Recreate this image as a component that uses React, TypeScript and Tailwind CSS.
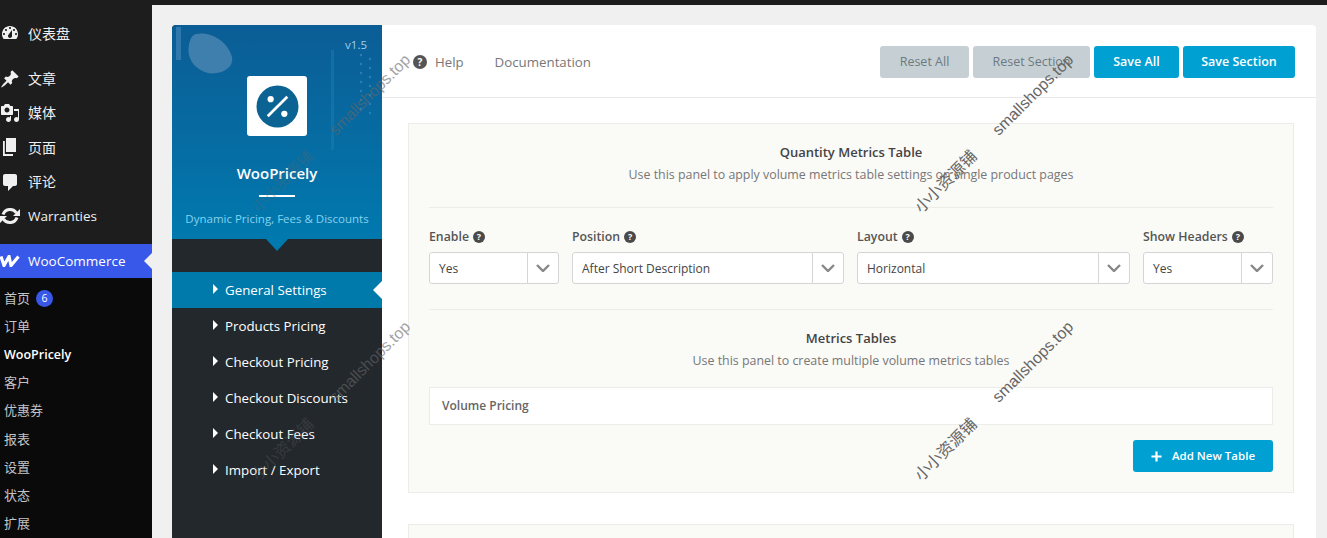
import React from "react";

const font = { fontFamily: '"Open Sans","Noto Sans CJK SC",sans-serif' };

function Help({ className = "" }: { className?: string }) {
  return (
    <span className={`inline-flex items-center justify-center rounded-full bg-[#4a4a4a] text-white font-bold ${className}`}>?</span>
  );
}

const icons: Record<string, React.ReactNode> = {
  dash: (
    <svg viewBox="0 0 20 20" className="w-[20px] h-[20px]" fill="#f0f0f1">
      <path fillRule="evenodd" d="M3.76 16h12.48c1.100-1.370 1.760-3.110 1.760-5 0-4.420-3.580-8-8-8s-8 3.580-8 8c0 1.890.66 3.630 1.760 5zM10 4c.55 0 1 .45 1 1s-.45 1-1 1-1-.45-1-1 .45-1 1-1zM6 6c.55 0 1 .45 1 1s-.45 1-1 1-1-.45-1-1 .45-1 1-1zm8 0c.55 0 1 .45 1 1s-.45 1-1 1-1-.45-1-1 .45-1 1-1zm-5.370 5.550L12 7v6c0 1.100-.9 2-2 2s-2-.9-2-2c0-.57.24-1.080.63-1.450zM4 10c.55 0 1 .45 1 1s-.45 1-1 1-1-.45-1-1 .45-1 1-1zm12 0c.55 0 1 .45 1 1s-.45 1-1 1-1-.45-1-1 .45-1 1-1z" />
    </svg>
  ),
  pin: (
    <svg viewBox="0 0 20 20" className="w-[20px] h-[20px]" fill="#f0f0f1">
      <path d="M10.440 3.020l1.820-1.820 6.360 6.350-1.830 1.820c-1.050-.68-2.480-.57-3.410.36l-.75.75c-.92.93-1.040 2.350-.35 3.410l-1.830 1.820-2.410-2.410-2.800 2.790c-.42.42-3.380 2.710-3.800 2.290s1.860-3.390 2.280-3.810l2.790-2.790L4.100 9.360l1.830-1.820c1.050.69 2.480.57 3.400-.36l.75-.75c.93-.92 1.050-2.350.36-3.410z" />
    </svg>
  ),
  media: (
    <svg viewBox="0 0 20 20" className="w-[20px] h-[20px]" fill="#f0f0f1">
      <path fillRule="evenodd" d="M13 11V4c0-.55-.45-1-1-1h-1.670L9 1H5L3.670 3H2c-.55 0-1 .45-1 1v7c0 .55.45 1 1 1h10c.55 0 1-.45 1-1zM7 4.500c1.380 0 2.500 1.120 2.500 2.500S8.380 9.500 7 9.500 4.500 8.380 4.500 7 5.620 4.500 7 4.500z" />
      <path d="M14 6h5v10.500c0 1.380-1.120 2.500-2.500 2.500S14 17.880 14 16.500s1.120-2.500 2.500-2.500c.57 0 1.100.19 1.500.5V8h-4zM11 13v3.500c0 1.380-1.120 2.500-2.500 2.500S6 17.880 6 16.500 7.120 14 8.500 14c.55 0 1.080.19 1.500.5V13z" />
    </svg>
  ),
  page: (
    <svg viewBox="0 0 20 20" className="w-[20px] h-[20px]" fill="#f0f0f1">
      <path d="M6 1h10v14H6z" />
      <path d="M3 4h1.800v13H13v2H3z" />
    </svg>
  ),
  comment: (
    <svg viewBox="0 0 20 20" className="w-[20px] h-[20px]" fill="#f0f0f1">
      <path d="M5 2h10c1.100 0 2 .9 2 2v8c0 1.100-.9 2-2 2h-2l-5 5v-5H5c-1.100 0-2-.9-2-2V4c0-1.100.9-2 2-2z" />
    </svg>
  ),
  sync: (
    <svg viewBox="0 0 20 20" className="w-[20px] h-[20px]" fill="none" stroke="#f0f0f1" strokeWidth="3">
      <path d="M3 8.500A7.500 7.500 0 0 1 16.500 7" />
      <path d="M17 11.500A7.500 7.500 0 0 1 3.500 13" />
      <path d="M20 3v7h-7z" fill="#f0f0f1" stroke="none" />
      <path d="M0 17v-7h7z" fill="#f0f0f1" stroke="none" />
    </svg>
  ),
};

const topMenu = [
  { k: "dash", t: "仪表盘" },
  { k: "pin", t: "文章" },
  { k: "media", t: "媒体" },
  { k: "page", t: "页面" },
  { k: "comment", t: "评论" },
  { k: "sync", t: "Warranties" },
];

const subMenu = ["订单", "WooPricely", "客户", "优惠券", "报表", "设置", "状态", "扩展"];
const tabs = ["General Settings", "Products Pricing", "Checkout Pricing", "Checkout Discounts", "Checkout Fees", "Import / Export"];

function Sidebar() {
  return (
    <aside className="w-[152px] shrink-0 flex flex-col bg-[#1d1d1d] h-full">
      <div className="pt-[11px] pb-[11px]">
        {topMenu.map((m) => (
          <div key={m.t} className={`flex items-center h-[34.400px] text-[#f0f0f1] text-[14px] ${m.k === "dash" ? "mb-[11px]" : ""}`}>
            <span className="w-[28px] shrink-0 flex items-center">{icons[m.k]}</span>
            <span className={m.k === "sync" ? "text-[13.500px]" : ""}>{m.t}</span>
          </div>
        ))}
      </div>
      <div className="relative h-[34px] bg-[#3858e9] flex items-center text-white text-[13.500px] shrink-0">
        <span className="w-[28px] shrink-0 flex items-center">
          <svg viewBox="0 0 20 12" className="w-[20px] h-[12px]">
            <path d="M1 1.500 L4 10.500 L9 1.500 L11 10.500 L18.500 1.500" fill="none" stroke="#fff" strokeWidth="3.200" />
          </svg>
        </span>
        WooCommerce
        <span className="absolute right-0 top-[9px] w-0 h-0 border-y-[8px] border-y-transparent border-r-[8px] border-r-[#f0f0f1]" />
      </div>
      <div className="flex-1 bg-[#0a0a0a] pt-[6px] text-[13px] pl-[4px] text-[#c3c4c7]">
        <div className="h-[28.200px] flex items-center gap-[6px]">
          首页
          <span className="w-[17px] h-[17px] rounded-full bg-[#3858e9] text-white text-[10.500px] flex items-center justify-center">6</span>
        </div>
        {subMenu.map((s) => (
          <div key={s} className={`h-[28.200px] flex items-center ${s === "WooPricely" ? "text-white font-semibold text-[12.500px] pt-[2px]" : ""}`}>{s}</div>
        ))}
      </div>
    </aside>
  );
}

function PluginNav() {
  return (
    <div className="w-[210px] shrink-0 bg-[#23282d] rounded-tl-[4px] overflow-hidden">
      <div className="relative h-[214px] bg-gradient-to-b from-[#0b5d95] to-[#0079ae] flex flex-col items-center pt-[51px]">
        <svg viewBox="0 0 210 130" className="absolute left-0 top-0 w-[210px] h-[130px]">
          <rect x="4" y="2" width="5" height="33" fill="#2f78ad" />
          <path d="M24 9 C38 6 56 16 60 32 C62 44 48 50 36 48 C24 45 14 34 17 20 C18 14 20 10 24 9Z" fill="#3f7fae" />
          <rect x="159" y="25" width="3" height="100" fill="#1a7db3" opacity="0.5" />
          {[0, 1, 2, 3, 4, 5, 6].map((r) => (
            <React.Fragment key={r}>
              <circle cx="189" cy={30 + r * 9} r="1.200" fill="#2a7fb3" />
              <circle cx="198" cy={34 + r * 9} r="1.200" fill="#2a7fb3" />
            </React.Fragment>
          ))}
        </svg>
        <span className="absolute right-[15px] top-[11px] text-[11.500px] text-[#9fd0ea]">v1.5</span>
        <div className="relative w-[60px] h-[60px] bg-white rounded-[3px] flex items-center justify-center">
          <svg viewBox="0 0 44 44" className="w-[43px] h-[43px]">
            <circle cx="22" cy="22" r="21.500" fill="#0b6394" />
            <circle cx="15" cy="14.500" r="3.200" fill="#fff" />
            <circle cx="29" cy="29.500" r="3.200" fill="#fff" />
            <path d="M12 32 L32 12" stroke="#fff" strokeWidth="2.800" />
          </svg>
        </div>
        <div className="relative mt-[26px] text-[15px] leading-[22px] font-semibold text-white">WooPricely</div>
        <div className="relative mt-[11px] w-[36px] h-[2px] bg-white" />
        <div className="relative mt-[13px] text-[11.500px] leading-[18px] text-[#84d3f0] whitespace-nowrap">Dynamic Pricing, Fees &amp; Discounts</div>
        <span className="absolute left-1/2 -ml-[11px] -bottom-[12px] w-0 h-0 border-x-[11px] border-x-transparent border-t-[12px] border-t-[#0079ae]" />
      </div>
      <div className="pt-[33px]">
        {tabs.map((t, i) => (
          <div key={t} className={`relative h-[36px] pl-[41px] flex items-center gap-[7px] text-[13.300px] text-white ${i === 0 ? "bg-[#0079ab]" : ""}`}>
            <span className="w-0 h-0 -mt-[2px] border-y-[5px] border-y-transparent border-l-[5px] border-l-white" />
            <span className="pt-[1px]">{t}</span>
            {i === 0 && <span className="absolute right-0 top-[9px] w-0 h-0 border-y-[9px] border-y-transparent border-r-[9px] border-r-white" />}
          </div>
        ))}
      </div>
    </div>
  );
}

function Btn({ children, gray, w }: { children: React.ReactNode; gray?: boolean; w: string }) {
  return (
    <button className={`${w} h-[32px] rounded-[3px] text-[12.500px] ${gray ? "bg-[#c6d0d4] text-[#6d7a80]" : "bg-[#00a0d2] text-white font-semibold"}`}>{children}</button>
  );
}

function Select({ label, value, w }: { label: string; value: string; w: string }) {
  return (
    <div className={w}>
      <div className="h-[16px] flex items-center gap-[4px] text-[12.300px] font-semibold text-[#555] mb-[7px] mt-[1px]">
        {label}
        <Help className="w-[12px] h-[12px] text-[9px]" />
      </div>
      <div className="h-[32px] flex bg-white border border-[#d5d5d5] rounded-[3px] text-[12px] text-[#444]">
        <span className="flex-1 flex items-center pl-[9px] pt-[1px]">{value}</span>
        <span className="w-[31px] border-l border-[#d5d5d5] flex items-center justify-center">
          <svg viewBox="0 0 14 8" className="w-[14px] h-[8px]">
            <path d="M1 1 L7 7 L13 1" fill="none" stroke="#888" strokeWidth="2.400" />
          </svg>
        </span>
      </div>
    </div>
  );
}

function Heading({ title, sub }: { title: string; sub: string }) {
  return (
    <div className="text-center">
      <div className="text-[13px] leading-[18px] font-semibold text-[#444]">{title}</div>
      <div className="mt-[5px] text-[12.400px] leading-[18px] text-[#777]">{sub}</div>
    </div>
  );
}

function Content() {
  return (
    <div className="flex-1 bg-white rounded-tr-[4px] overflow-hidden">
      <header className="h-[73px] border-b border-[#e8e8e8] flex items-center pl-[31px] pr-[21px] pt-[2px]">
        <Help className="w-[14px] h-[14px] text-[10px] bg-[#555]" />
        <span className="ml-[8px] text-[13.200px] text-[#777] pt-[1px]">Help</span>
        <span className="ml-[31px] text-[13.300px] text-[#777] pt-[1px]">Documentation</span>
        <div className="ml-auto flex gap-[4px]">
          <Btn gray w="w-[89px]">Reset All</Btn>
          <Btn gray w="w-[117px]">Reset Section</Btn>
          <Btn w="w-[85px]">Save All</Btn>
          <Btn w="w-[112px]">Save Section</Btn>
        </div>
      </header>
      <div className="px-[26px] pr-[22px] pt-[25px]">
        <section className="h-[370px] bg-[#fafaf7] border border-[#ececE8] px-[20px] pt-[19px]">
          <Heading title="Quantity Metrics Table" sub="Use this panel to apply volume metrics table settings on single product pages" />
          <div className="mt-[23px] border-t border-[#ececE8] pt-[20px] flex gap-[13px]">
            <Select label="Enable" value="Yes" w="w-[130px]" />
            <Select label="Position" value="After Short Description" w="w-[272px]" />
            <Select label="Layout" value="Horizontal" w="flex-1" />
            <Select label="Show Headers" value="Yes" w="w-[130px]" />
          </div>
          <div className="mt-[25px] border-t border-[#ececE8] pt-[19px]">
            <Heading title="Metrics Tables" sub="Use this panel to create multiple volume metrics tables" />
          </div>
          <div className="mt-[17px] h-[38px] bg-white border border-[#ececE8] flex items-center pl-[12px] text-[12px] font-semibold text-[#666]">Volume Pricing</div>
          <div className="mt-[15px] flex justify-end">
            <button className="w-[140px] h-[32px] rounded-[3px] bg-[#00a0d2] text-white text-[11.500px] font-semibold flex items-center justify-center gap-[10px]">
              <svg viewBox="0 0 12 12" className="w-[11px] h-[11px]"><path d="M6 0.500v11M0.500 6h11" stroke="#fff" strokeWidth="2.400" /></svg>
              Add New Table
            </button>
          </div>
        </section>
        <section className="mt-[31px] h-[40px] bg-[#fafaf7] border border-[#ececE8]" />
      </div>
    </div>
  );
}

const marks = [
  { t: "smallshops.top", x: 370, y: 95, o: "opacity-60" },
  { t: "smallshops.top", x: 370, y: 362, o: "opacity-60" },
  { t: "smallshops.top", x: 1033, y: 95, o: "" },
  { t: "smallshops.top", x: 1033, y: 362, o: "" },
  { t: "小小资源铺", x: 283, y: 182, o: "opacity-30" },
  { t: "小小资源铺", x: 283, y: 450, o: "opacity-30" },
  { t: "小小资源铺", x: 946, y: 182, o: "" },
  { t: "小小资源铺", x: 946, y: 450, o: "" },
];

export default function App() {
  return (
    <div className="relative w-[1327px] h-[538px] overflow-hidden flex flex-col bg-[#f0f0f1]" style={font}>
      <div className="h-[5px] shrink-0 bg-[#1d1d1d]" />
      <div className="flex-1 min-h-0 flex">
        <Sidebar />
        <main className="flex-1 pl-[20px] pr-[11px] pt-[20px] min-w-0">
          <div className="flex h-[600px]">
            <PluginNav />
            <Content />
          </div>
        </main>
      </div>
      {marks.map((m, i) => (
        <span
          key={i}
          className={`absolute -translate-x-1/2 -translate-y-1/2 -rotate-45 whitespace-nowrap text-[16px] text-[#666] pointer-events-none ${m.o}`}
          style={{ left: m.x, top: m.y, fontFamily: '"Liberation Sans","Noto Sans CJK SC",sans-serif' }}
        >
          {m.t}
        </span>
      ))}
    </div>
  );
}
